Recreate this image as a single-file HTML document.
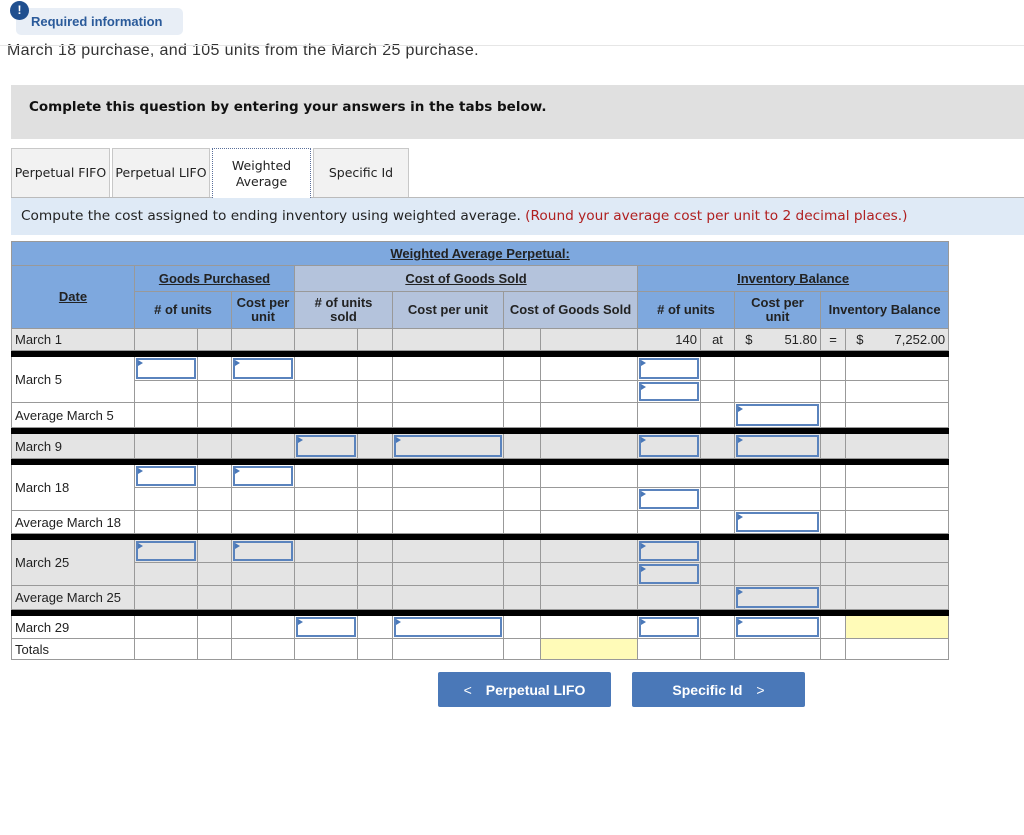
<!DOCTYPE html>
<html><head><meta charset="utf-8"><style>
*{box-sizing:border-box;margin:0;padding:0}
body{width:1024px;height:835px;background:#fff;font-family:"Liberation Sans",Arial,sans-serif;position:relative;overflow:hidden;color:#222}
.abs{position:absolute}
.tab{position:absolute;top:148px;height:49px;background:#f2f2f2;border:1px solid #c8c8c8;border-bottom:none;font-family:"DejaVu Sans",sans-serif;font-size:12.5px;display:flex;align-items:center;justify-content:center;text-align:center;line-height:16px;color:#222}
table{position:absolute;left:11px;top:241px;border-collapse:collapse;table-layout:fixed;width:938px;font-size:13px}
td{border:1px solid #999;padding:0;position:relative;overflow:hidden;white-space:nowrap}
.h{background:#7ea8de;font-weight:bold;text-align:center;color:#222;font-size:13px;line-height:14px}
.hc{background:#b4c3dc}
.u{text-decoration:underline}
.g td{background:#e4e4e4}
.bk td{background:#000;height:6px;border-color:#000}
.l{padding-left:3px}
.in{position:absolute;left:1px;top:1px;right:1px;bottom:1px;border:2px solid #5a83bd;background:#fff}
.g .in{background:#e4e4e4}
.in:before{content:"";position:absolute;left:0;top:0;border-left:5px solid #4a78b8;border-top:3px solid transparent;border-bottom:3px solid transparent}
.y{background:#fffbb8!important}
.r{text-align:right;padding-right:3px}
.btn{position:absolute;top:672px;height:35px;background:#4a78b8;border-radius:2px;color:#fff;font-weight:bold;font-size:14px;display:flex;align-items:center;justify-content:center}
</style></head><body>
<div class="abs" style="left:16px;top:8px;width:167px;height:27px;background:#e8eef6;border-radius:5px"></div>
<div class="abs" style="left:10px;top:1px;width:19px;height:19px;border-radius:50%;background:#1f4f8f;color:#fff;font-weight:bold;font-size:12px;text-align:center;line-height:19px">!</div>
<div class="abs" style="left:31px;top:14px;font-size:13px;font-weight:bold;color:#2a5a9a">Required information</div>
<div class="abs" style="left:7px;top:42px;font-size:16px;letter-spacing:0.35px;color:#333">March 18 purchase, and 105 units from the March 25 purchase.</div>
<div class="abs" style="left:0;top:45px;width:1024px;height:1px;background:#e6e6e6"></div>
<div class="abs" style="left:11px;top:85px;width:1013px;height:54px;background:#e0e0e0"></div>
<div class="abs" style="left:29px;top:99px;font-family:'DejaVu Sans',sans-serif;font-weight:bold;font-size:13.5px;color:#111">Complete this question by entering your answers in the tabs below.</div>
<div class="tab" style="left:11px;width:99px">Perpetual FIFO</div>
<div class="tab" style="left:112px;width:98px">Perpetual LIFO</div>
<div class="tab" style="left:212px;width:99px;background:#fff;border:1px dotted #5a6f9a;border-bottom:none;height:50px;z-index:2">Weighted<br>Average</div>
<div class="tab" style="left:313px;width:96px">Specific Id</div>
<div class="abs" style="left:11px;top:197px;width:1013px;height:38px;background:#dfeaf6;border-top:1px solid #bbb"></div>
<div class="abs" style="left:21px;top:208px;font-family:'DejaVu Sans',sans-serif;font-size:13.7px;color:#222">Compute the cost assigned to ending inventory using weighted average. <span style="color:#b02020">(Round your average cost per unit to 2 decimal places.)</span></div>

<table>
<colgroup><col style="width:123px"><col style="width:63px"><col style="width:34px"><col style="width:63px"><col style="width:63px"><col style="width:35px"><col style="width:111px"><col style="width:37px"><col style="width:97px"><col style="width:63px"><col style="width:34px"><col style="width:86px"><col style="width:25px"><col style="width:103px"></colgroup>
<tr style="height:24px"><td colspan="14" class="h"><span class="u">Weighted Average Perpetual:</span></td></tr>
<tr style="height:26px"><td rowspan="2" class="h"><span class="u">Date</span></td><td colspan="3" class="h"><span class="u">Goods Purchased</span></td><td colspan="5" class="h hc"><span class="u">Cost of Goods Sold</span></td><td colspan="5" class="h"><span class="u">Inventory Balance</span></td></tr>
<tr style="height:37px"><td colspan="2" class="h"># of units</td><td class="h">Cost per<br>unit</td><td colspan="2" class="h hc"># of units<br>sold</td><td class="h hc">Cost per unit</td><td colspan="2" class="h hc">Cost of Goods Sold</td><td colspan="2" class="h"># of units</td><td class="h">Cost per<br>unit</td><td colspan="2" class="h">Inventory Balance</td></tr>
<tr class="g" style="height:22px"><td class="l">March 1</td><td></td><td></td><td></td><td></td><td></td><td></td><td></td><td></td><td class="r">140</td><td style="text-align:center">at</td><td class="l">&nbsp;&nbsp;$<span style="float:right;padding-right:3px">51.80</span></td><td style="text-align:center">=</td><td class="l">&nbsp;&nbsp;$<span style="float:right;padding-right:3px">7,252.00</span></td></tr>
<tr class="bk"><td colspan="14"></td></tr>
<tr style="height:24px"><td rowspan="2" class="l">March 5</td><td><div class="in"></div></td><td></td><td><div class="in"></div></td><td></td><td></td><td></td><td></td><td></td><td><div class="in"></div></td><td></td><td></td><td></td><td></td></tr>
<tr style="height:22px"><td></td><td></td><td></td><td></td><td></td><td></td><td></td><td></td><td><div class="in"></div></td><td></td><td></td><td></td><td></td></tr>
<tr style="height:25px"><td class="l">Average March 5</td><td></td><td></td><td></td><td></td><td></td><td></td><td></td><td></td><td></td><td></td><td><div class="in"></div></td><td></td><td></td></tr>
<tr class="bk"><td colspan="14"></td></tr>
<tr class="g" style="height:25px"><td class="l">March 9</td><td></td><td></td><td></td><td><div class="in"></div></td><td></td><td><div class="in"></div></td><td></td><td></td><td><div class="in"></div></td><td></td><td><div class="in"></div></td><td></td><td></td></tr>
<tr class="bk"><td colspan="14"></td></tr>
<tr style="height:23px"><td rowspan="2" class="l">March 18</td><td><div class="in"></div></td><td></td><td><div class="in"></div></td><td></td><td></td><td></td><td></td><td></td><td></td><td></td><td></td><td></td><td></td></tr>
<tr style="height:23px"><td></td><td></td><td></td><td></td><td></td><td></td><td></td><td></td><td><div class="in"></div></td><td></td><td></td><td></td><td></td></tr>
<tr style="height:23px"><td class="l">Average March 18</td><td></td><td></td><td></td><td></td><td></td><td></td><td></td><td></td><td></td><td></td><td><div class="in"></div></td><td></td><td></td></tr>
<tr class="bk"><td colspan="14"></td></tr>
<tr class="g" style="height:23px"><td rowspan="2" class="l">March 25</td><td><div class="in"></div></td><td></td><td><div class="in"></div></td><td></td><td></td><td></td><td></td><td></td><td><div class="in"></div></td><td></td><td></td><td></td><td></td></tr>
<tr class="g" style="height:23px"><td></td><td></td><td></td><td></td><td></td><td></td><td></td><td></td><td><div class="in"></div></td><td></td><td></td><td></td><td></td></tr>
<tr class="g" style="height:24px"><td class="l">Average March 25</td><td></td><td></td><td></td><td></td><td></td><td></td><td></td><td></td><td></td><td></td><td><div class="in"></div></td><td></td><td></td></tr>
<tr class="bk"><td colspan="14"></td></tr>
<tr style="height:23px"><td class="l">March 29</td><td></td><td></td><td></td><td><div class="in"></div></td><td></td><td><div class="in"></div></td><td></td><td></td><td><div class="in"></div></td><td></td><td><div class="in"></div></td><td></td><td class="y"></td></tr>
<tr style="height:21px"><td class="l">Totals</td><td></td><td></td><td></td><td></td><td></td><td></td><td></td><td class="y"></td><td></td><td></td><td></td><td></td><td></td></tr>
</table>

<div class="btn" style="left:438px;width:173px"><span style="margin-right:14px;font-weight:normal">&lt;</span>Perpetual LIFO</div>
<div class="btn" style="left:632px;width:173px">Specific Id<span style="margin-left:14px;font-weight:normal">&gt;</span></div>
</body></html>
